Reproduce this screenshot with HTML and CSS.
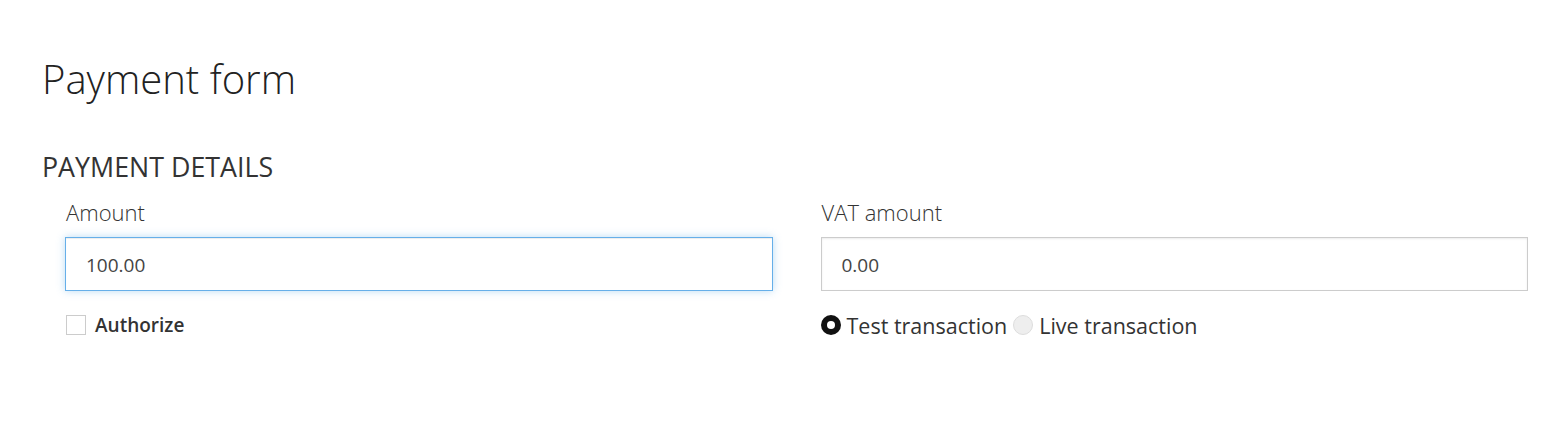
FILE: index.html
```html
<!DOCTYPE html>
<html>
<head>
<meta charset="utf-8">
<link rel="stylesheet" href="styles.css">
</head>
<body>
<div class="page">
  <h1 class="title">Payment form</h1>
  <h2 class="section">PAYMENT DETAILS</h2>
  <div class="row">
    <div class="col">
      <label class="label">Amount</label>
      <div class="input focus">100.00</div>
      <div class="check-row">
        <span class="checkbox"></span>
        <span class="check-label">Authorize</span>
      </div>
    </div>
    <div class="col">
      <label class="label">VAT amount</label>
      <div class="input">0.00</div>
      <div class="radio-row">
        <span class="radio on"></span><span class="radio-label">Test transaction</span>
        <span class="radio off"></span><span class="radio-label">Live transaction</span>
      </div>
    </div>
  </div>
</div>
</body>
</html>
```

FILE: styles.css
```css
* { box-sizing: border-box; }
html, body { margin: 0; padding: 0; background: #fff; }
body { font-family: "Open Sans", "Liberation Sans", sans-serif; color: #333; }
.page { padding: 52px 12px 0 41px; }
.title {
  margin: 0 0 0 1px;
  font-weight: 300;
  font-size: 40px;
  line-height: 54px;
  color: #222;
}
.section {
  margin: 44px 0 0 1px;
  font-weight: 400;
  font-size: 26.8px;
  line-height: 34px;
  color: #333;
}
.row {
  display: grid;
  grid-template-columns: 1fr 1fr;
  column-gap: 48px;
  margin: 0 24px;
}
.col { display: flex; flex-direction: column; }
.label {
  font-weight: 300;
  font-size: 22px;
  line-height: 28px;
  margin-top: 14px;
  margin-left: 1px;
  color: #333;
}
.input {
  margin-top: 11px;
  height: 54px;
  border: 1px solid #ccc;
  box-shadow: inset 0 1px 2px rgba(0,0,0,0.08);
  padding: 2px 20px 0;
  display: flex;
  align-items: center;
  font-size: 19px;
  color: #444;
}
.input.focus {
  border-color: #66afe9;
  box-shadow: inset 0 1px 1px rgba(0,0,0,0.075), 0 0 8px rgba(102,175,233,0.45);
}
.check-row, .radio-row {
  display: flex;
  align-items: center;
  margin-top: 22px;
  height: 24px;
}
.checkbox {
  width: 20px; height: 20px;
  border: 1px solid #ccc;
  background: #fff;
  margin-left: 1px;
  margin-right: 9px;
}
.check-label { font-weight: 600; font-size: 19px; color: #333; }
.radio {
  width: 20px; height: 20px; border-radius: 50%;
  margin-right: 6px;
  flex: none;
}
.radio.on { background: #111; position: relative; }
.radio.on::after {
  content: ""; position: absolute; left: 6px; top: 6px;
  width: 8px; height: 8px; border-radius: 50%; background: #fff;
}
.radio.off { background: #eee; border: 1px solid #ddd; margin-left: 6px; }
.radio-label { font-weight: 400; font-size: 21.5px; color: #333; }
```
